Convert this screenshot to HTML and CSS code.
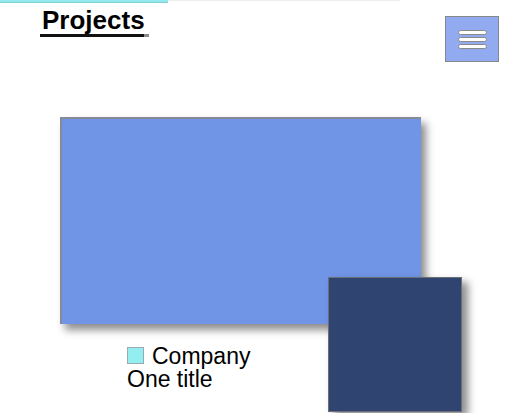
FILE: index.html
```html
<!DOCTYPE html>
<html lang="en">
<head>
    <meta charset="UTF-8">
    <meta name="viewport" content="width=device-width, initial-scale=1.0">
    <title>Projects</title>
    <link rel="stylesheet" href="styles.css">
</head>
<body>
    <div class="topbar">
        <div class="topbar-accent"></div>
        <div class="topbar-rest"></div>
    </div>
    <header class="header">
        <h1 class="title">Projects</h1>
        <button class="menu-button" aria-label="Menu">
            <span class="menu-bar"></span>
            <span class="menu-bar"></span>
            <span class="menu-bar"></span>
        </button>
    </header>
    <div class="stage">
        <div class="panel-main"></div>
        <div class="panel-dark"></div>
        <div class="legend">
            <div class="legend-row">
                <span class="legend-swatch"></span>
                <span>Company</span>
            </div>
            <div class="legend-row">One title</div>
        </div>
    </div>
</body>
</html>
```

FILE: styles.css
```css
body {
    margin: 0;
    min-height: 413px;
    font-family: "Liberation Sans", Arial, sans-serif;
    background-color: #fff;
    color: #000;
}
.topbar {
    display: flex;
    align-items: flex-start;
}
.topbar-accent {
    width: 168px;
    height: 2px;
    background-color: #93eaec;
    border-bottom: 1px solid #7fd3d8;
}
.topbar-rest {
    width: 232px;
    height: 1px;
    background-color: #eeeeee;
}
.header {
    display: flex;
    justify-content: space-between;
    align-items: flex-start;
    padding: 0 17px 0 40px;
}
.title {
    margin: 3px 0 0 0;
    padding: 0 4px 3px 2px;
    font-size: 26px;
    line-height: 28px;
    font-weight: bold;
    /* underline with a small grey tail */
    background: linear-gradient(to right, #111 calc(100% - 5px), #8a8a8a 0) no-repeat left bottom / 100% 3px;
}
.menu-button {
    margin-top: 13px;
    width: 54px;
    height: 46px;
    padding: 0;
    background-color: #91aaf0;
    border: 1px solid #888;
    display: flex;
    flex-direction: column;
    align-items: center;
    justify-content: center;
    gap: 2px;
    cursor: pointer;
}
.menu-bar {
    display: block;
    width: 27px;
    height: 3px;
    background-color: #fff;
    border: 1px solid #8a8a8a;
    border-radius: 3px;
}
.stage {
    position: relative;
    margin-top: 55px;
    height: 296px;
}
.panel-main {
    margin-left: 60px;
    width: 359px;
    height: 205px;
    background-color: #7094e6;
    border-left: 2px solid #858a96;
    border-top: 2px solid #858a96;
    box-shadow: 5px 6px 8px rgba(0, 0, 0, 0.45);
}
.panel-dark {
    position: absolute;
    left: 328px;
    top: 160px;
    width: 132px;
    height: 133px;
    background-color: #2f4470;
    border: 1px solid #6b6f78;
    box-shadow: 6px 5px 8px rgba(0, 0, 0, 0.45);
}
.legend {
    margin: 21px 0 0 127px;
    font-size: 23px;
    line-height: 23px;
}
.legend-row {
    display: flex;
    align-items: flex-start;
}
.legend-swatch {
    width: 15px;
    height: 15px;
    margin: 2px 8px 0 0;
    background-color: #93eef0;
    border: 1px solid #9aaab0;
}
```
